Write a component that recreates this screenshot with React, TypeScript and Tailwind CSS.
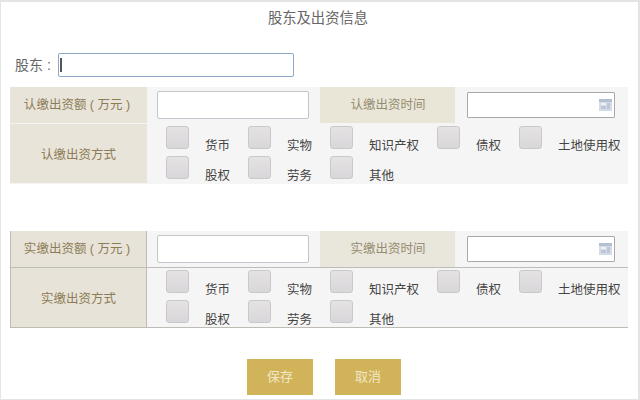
import React from 'react'

const font = { fontFamily: '"Liberation Sans", "Noto Sans CJK SC", sans-serif' }

const methods = [
  { name: '货币', width: 'w-[82px]' },
  { name: '实物', width: 'w-[82px]' },
  { name: '知识产权', width: 'w-[107px]' },
  { name: '债权', width: 'w-[82px]' },
  { name: '土地使用权', width: 'w-[105px]' },
  { name: '股权', width: 'w-[82px]' },
  { name: '劳务', width: 'w-[82px]' },
  { name: '其他', width: 'w-[107px]' },
]

const CalendarIcon = () => (
  <svg width="13" height="12" viewBox="0 0 13 12" className="shrink-0">
    <rect x="0" y="0" width="13" height="12" fill="#d4dbe6" />
    <rect x="0" y="0" width="13" height="3" fill="#b4bfd0" />
    <rect x="2" y="4" width="5" height="2" fill="#eef1f6" />
    <rect x="8" y="4" width="3" height="6" fill="#bcc6d6" />
    <rect x="2" y="7" width="5" height="3" fill="#bcc6d6" />
  </svg>
)

const Method = ({ name, width }: { name: string; width: string }) => (
  <div className={`flex h-[30px] items-start ${width}`}>
    <div className="h-[23px] w-[23px] shrink-0 rounded-[3px] border border-[#c9c9c9] bg-gradient-to-b from-[#e4e2e3] to-[#d9d7d9]" />
    <span className="ml-4 mt-[12px] text-[12.5px] leading-[16px] whitespace-nowrap text-[#444]">{name}</span>
  </div>
)

const Section = ({ prefix, lined }: { prefix: string; lined: boolean }) => {
  const line = lined ? 'border-[#bdbdb5]' : 'border-transparent'
  const labelBg = lined ? 'bg-[#e8e3d9]' : 'bg-[#e9e4da]'
  return (
    <div className={`ml-[9px] w-[618px] border-b bg-[#f6f5f6] ${line}`}>
      <div className={`flex h-[37px] items-center border-b ${line}`}>
        <div className={`flex h-full w-[137px] shrink-0 items-center justify-center border-l border-r pt-[1px] pr-[3px] text-[12.5px] text-[#8c7c55] ${labelBg} ${line}`}>
          {prefix}缴出资额 ( 万元 )
        </div>
        <div className="ml-[10px] h-7 w-[152px] shrink-0 rounded-[2px] border border-[#c4c4cc] bg-white" />
        <div className={`ml-[11px] flex h-full w-[135px] shrink-0 items-center justify-center pt-[1px] pl-[1px] text-[12.5px] text-[#968c70] ${lined ? 'bg-[#e9e6dc]' : 'bg-[#e9e6d8]'}`}>
          {prefix}缴出资时间
        </div>
        <div className="ml-3 flex h-[26px] w-[148px] shrink-0 items-center justify-end rounded-[1px] border border-[#a9a9a9] bg-white pr-[2px]">
          <CalendarIcon />
        </div>
      </div>
      <div className="flex h-[59px]">
        <div className={`flex w-[137px] shrink-0 items-center justify-center border-l border-r pt-[3px] text-[12.5px] text-[#8c7c55] ${labelBg} ${line}`}>
          {prefix}缴出资方式
        </div>
        <div className="flex flex-wrap content-start pl-[19px] pt-[2px]">
          {methods.map((m) => (
            <Method key={m.name} name={m.name} width={m.width} />
          ))}
        </div>
      </div>
    </div>
  )
}

export default function App() {
  return (
    <div style={font} className="h-[400px] w-[640px] overflow-hidden border-t-2 border-b border-l border-r-2 border-[#e4e4e6] bg-white">
      <div className="pt-[7px] pr-[3px] text-center text-[14.3px] leading-[18px] text-[#666]">股东及出资信息</div>
      <div className="mt-[26px] flex h-[24px] items-center pl-[14px]">
        <span className="w-[43px] text-[14px] whitespace-nowrap text-[#666]">股东 :</span>
        <div className="flex h-[24px] w-[236px] items-center rounded-[2px] border border-[#8fa8c4] bg-white pl-[1px]">
          <div className="h-[14px] w-[2px] bg-[#555]" />
        </div>
      </div>
      <div className="mt-[10px]">
        <Section prefix="认" lined={false} />
      </div>
      <div className="mt-[47px]">
        <Section prefix="实" lined />
      </div>
      <div className="mt-[31px] flex pl-[246px]">
        <button className="h-9 w-[66px] bg-[#d1b35a] text-[13px] text-[#f1e7c8]">保存</button>
        <button className="ml-[22px] h-9 w-[66px] bg-[#d1b35a] text-[13px] text-[#f1e7c8]">取消</button>
      </div>
    </div>
  )
}
